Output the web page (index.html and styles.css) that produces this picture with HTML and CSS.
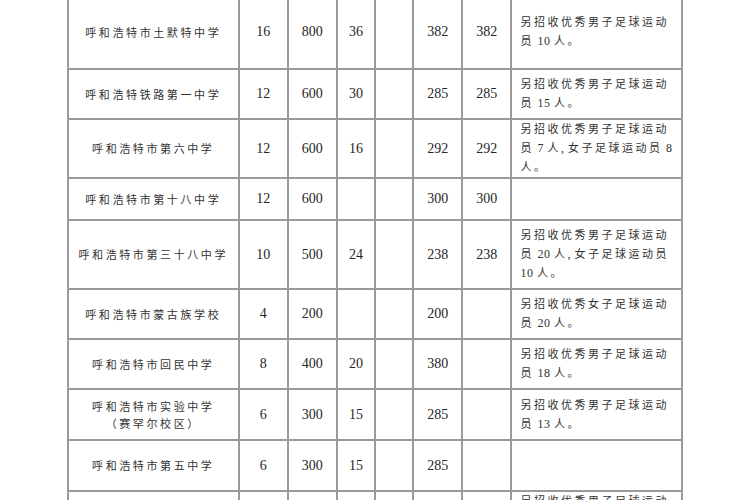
FILE: index.html
```html
<!DOCTYPE html>
<html lang="zh-CN">
<head>
<meta charset="utf-8">
<link rel="stylesheet" href="styles.css">
</head>
<body>
<table class="grid">
  <colgroup>
    <col class="c-name"><col class="c-n"><col class="c-n"><col class="c-s"><col class="c-s"><col class="c-n"><col class="c-n"><col class="c-note">
  </colgroup>
  <tr class="r74">
    <td class="name">呼和浩特市土默特中学</td><td>16</td><td>800</td><td>36</td><td></td><td>382</td><td>382</td>
    <td class="note">另招收优秀男子足球运动<br>员<span class="num"> 10 </span>人。</td>
  </tr>
  <tr class="r50">
    <td class="name">呼和浩特铁路第一中学</td><td>12</td><td>600</td><td>30</td><td></td><td>285</td><td>285</td>
    <td class="note">另招收优秀男子足球运动<br>员<span class="num"> 15 </span>人。</td>
  </tr>
  <tr class="r58">
    <td class="name">呼和浩特市第六中学</td><td>12</td><td>600</td><td>16</td><td></td><td>292</td><td>292</td>
    <td class="note">另招收优秀男子足球运动<br>员<span class="num"> 7 </span>人<span class="num">, </span>女子足球运动员<span class="num"> 8</span><br>人。</td>
  </tr>
  <tr class="r42">
    <td class="name">呼和浩特市第十八中学</td><td>12</td><td>600</td><td></td><td></td><td>300</td><td>300</td>
    <td class="note"></td>
  </tr>
  <tr class="r69">
    <td class="name">呼和浩特市第三十八中学</td><td>10</td><td>500</td><td>24</td><td></td><td>238</td><td>238</td>
    <td class="note">另招收优秀男子足球运动<br>员<span class="num"> 20 </span>人<span class="num">, </span>女子足球运动员<br><span class="num">10 </span>人。</td>
  </tr>
  <tr class="r50">
    <td class="name">呼和浩特市蒙古族学校</td><td>4</td><td>200</td><td></td><td></td><td>200</td><td></td>
    <td class="note">另招收优秀女子足球运动<br>员<span class="num"> 20 </span>人。</td>
  </tr>
  <tr class="r50">
    <td class="name">呼和浩特市回民中学</td><td>8</td><td>400</td><td>20</td><td></td><td>380</td><td></td>
    <td class="note">另招收优秀男子足球运动<br>员<span class="num"> 18 </span>人。</td>
  </tr>
  <tr class="r51">
    <td class="name two">呼和浩特市实验中学<br>（赛罕尔校区）</td><td>6</td><td>300</td><td>15</td><td></td><td>285</td><td></td>
    <td class="note">另招收优秀男子足球运动<br>员<span class="num"> 13 </span>人。</td>
  </tr>
  <tr class="r51">
    <td class="name">呼和浩特市第五中学</td><td>6</td><td>300</td><td>15</td><td></td><td>285</td><td></td>
    <td class="note"></td>
  </tr>
  <tr class="r60 last">
    <td class="name"></td><td></td><td></td><td></td><td></td><td></td><td></td>
    <td class="note">另招收优秀男子足球运动<br>员<span class="num"> 12 </span>人。</td>
  </tr>
</table>
</body>
</html>
```

FILE: styles.css
```css
html, body {
  margin: 0;
  padding: 0;
  background: #ffffff;
}

.grid {
  border-collapse: collapse;
  table-layout: fixed;
  width: 616px;
  margin: -6px 0 0 67px;
  font-family: "Liberation Serif", "Noto Sans CJK SC", serif;
  color: #262626;
}

.c-name { width: 170px; }
.c-n { width: 49px; }
.c-s { width: 38px; }
.c-note { width: 170px; }

.grid td {
  border: 2px solid #9a9a9a;
  padding: 0;
  text-align: center;
  vertical-align: middle;
  font-size: 14px;
  line-height: 18px;
  white-space: nowrap;
  overflow: hidden;
}

.grid td.name {
  font-family: "Noto Sans CJK SC", sans-serif;
  font-size: 11px;
  letter-spacing: 2.6px;
  color: #333;
  line-height: 17px;
}

.grid td.note {
  text-align: left;
  padding: 0 2px 0 8px;
  font-family: "Liberation Serif", "Noto Sans CJK SC", serif;
  font-size: 11px;
  letter-spacing: 2.5px;
  line-height: 19px;
  color: #333;
}

.grid td.note .num {
  font-family: "Liberation Serif", serif;
  font-size: 12px;
  letter-spacing: 0.5px;
}

.r74 td { height: 72px; }
.r50 td { height: 48px; }
.r58 td { height: 56px; }
.r42 td { height: 40px; }
.r69 td { height: 67px; }
.r51 td { height: 49px; }
.r60 td { height: 58px; }

.last td.note {
  vertical-align: top;
  padding-top: 0;
}
```
